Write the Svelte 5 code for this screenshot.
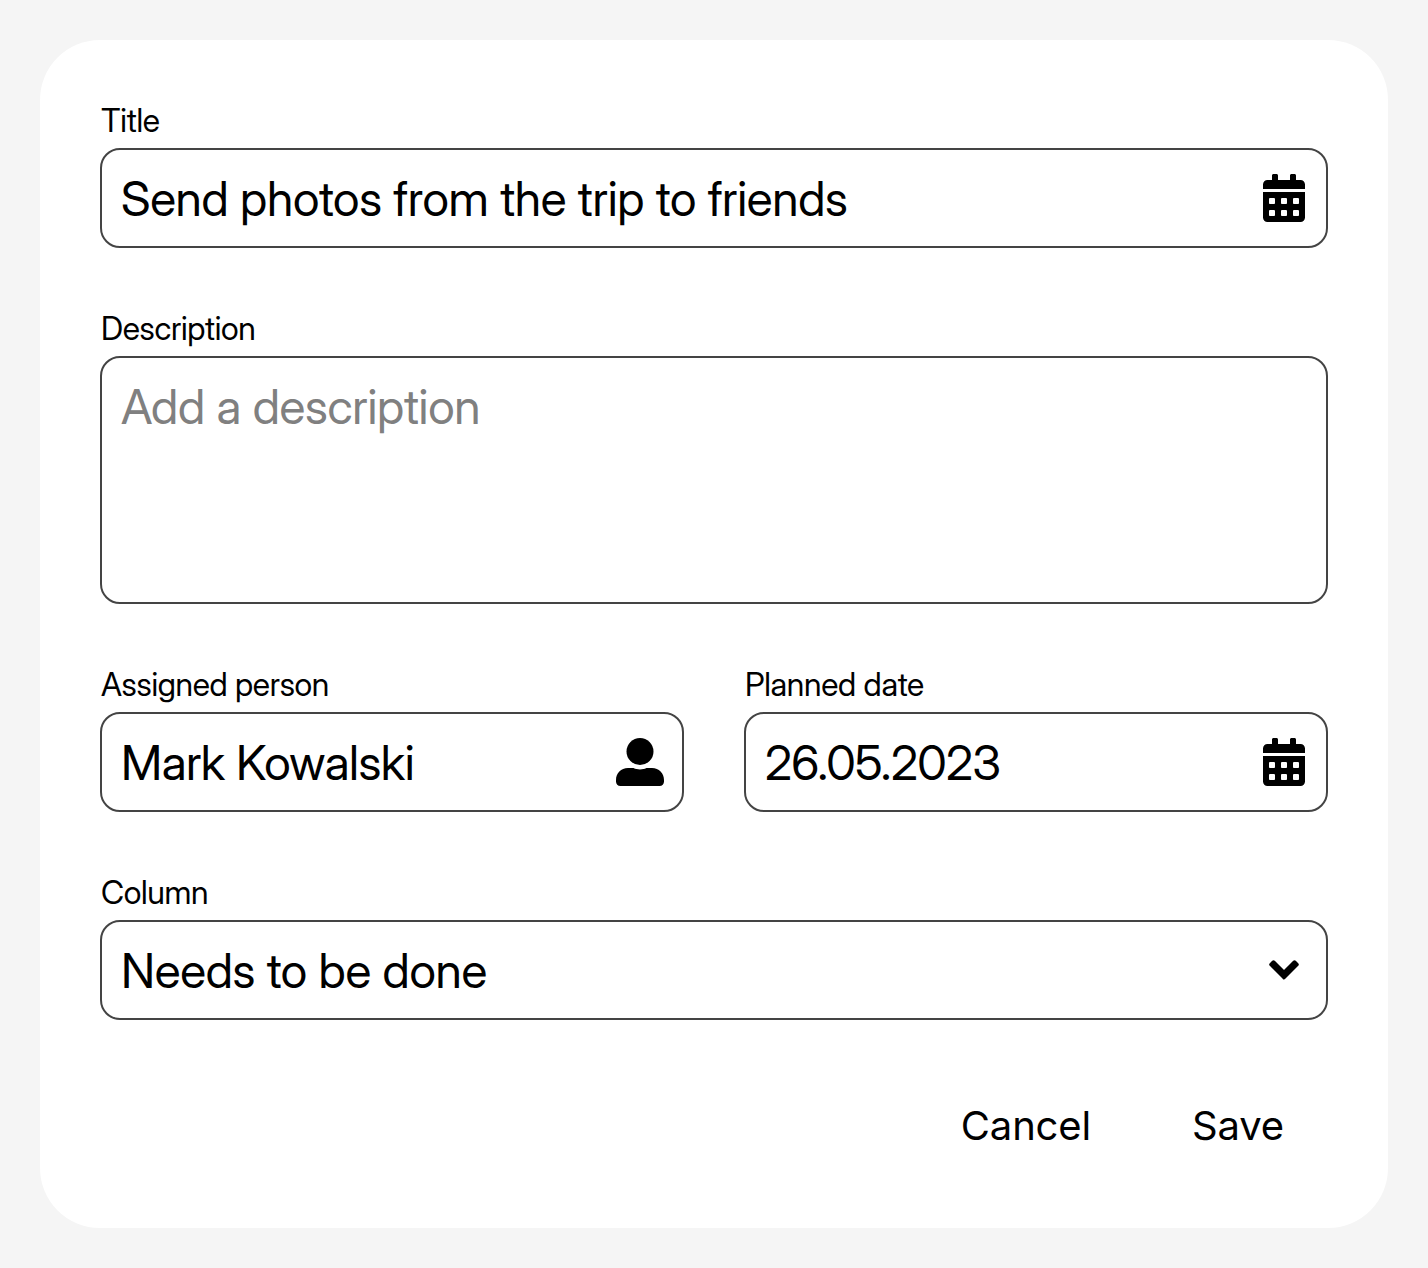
<script>
  const fields = [
    { label: 'Title', value: 'Send photos from the trip to friends', icon: 'calendar' },
    { label: 'Description', value: 'Add a description', kind: 'area' },
    { label: 'Assigned person', value: 'Mark Kowalski', icon: 'user', kind: 'half' },
    { label: 'Planned date', value: '26.05.2023', icon: 'calendar', kind: 'half date' },
    { label: 'Column', value: 'Needs to be done', icon: 'chevron' }
  ];
</script>

<main>
  <form class="card">
    {#each fields as f}
      <div class="field {f.kind ?? ''}">
        <span class="label">{f.label}</span>
        <div class="box">
          <span class="value">{f.value}</span>
          {#if f.icon === 'calendar'}
            <svg class="calendar" viewBox="0 0 448 512">
              <path d="M0 464c0 26.500 21.500 48 48 48h352c26.500 0 48-21.500 48-48V192H0v272zm320-196c0-6.600 5.400-12 12-12h40c6.600 0 12 5.400 12 12v40c0 6.600-5.400 12-12 12h-40c-6.600 0-12-5.400-12-12v-40zm0 128c0-6.600 5.400-12 12-12h40c6.600 0 12 5.400 12 12v40c0 6.600-5.400 12-12 12h-40c-6.600 0-12-5.400-12-12v-40zM192 268c0-6.600 5.400-12 12-12h40c6.600 0 12 5.400 12 12v40c0 6.600-5.400 12-12 12h-40c-6.600 0-12-5.400-12-12v-40zm0 128c0-6.600 5.400-12 12-12h40c6.600 0 12 5.400 12 12v40c0 6.600-5.400 12-12 12h-40c-6.600 0-12-5.400-12-12v-40zM64 268c0-6.600 5.400-12 12-12h40c6.600 0 12 5.400 12 12v40c0 6.600-5.400 12-12 12H76c-6.600 0-12-5.400-12-12v-40zm0 128c0-6.600 5.400-12 12-12h40c6.600 0 12 5.400 12 12v40c0 6.600-5.400 12-12 12H76c-6.600 0-12-5.400-12-12v-40zM400 64h-48V16c0-8.800-7.200-16-16-16h-32c-8.800 0-16 7.200-16 16v48H160V16c0-8.800-7.200-16-16-16h-32c-8.800 0-16 7.200-16 16v48H48C21.500 64 0 85.500 0 112v48h448v-48c0-26.500-21.500-48-48-48z" />
            </svg>
          {:else if f.icon === 'user'}
            <svg class="user" viewBox="0 0 48 48">
              <circle cx="24" cy="13.500" r="13.500" />
              <path d="M0 43.500V42C0 35 5 30 12 30H17.500C19.500 31 21.500 31.400 24 31.400S28.500 31 30.500 30H36C43 30 48 35 48 42V43.500C48 46.200 46.200 48 43.500 48H4.500C1.800 48 0 46.200 0 43.500Z" />
            </svg>
          {:else if f.icon === 'chevron'}
            <svg class="chevron" viewBox="0 0 42 48">
              <path d="M8.050 18.500L10.500 16.050L21 26.500L31.500 16.050L33.950 18.500L21 31.600Z" />
            </svg>
          {/if}
        </div>
      </div>
    {/each}
    <div class="actions">
      <button type="button">Cancel</button>
      <button type="button">Save</button>
    </div>
  </form>
</main>

<style>
  :global(body) { background: #f5f5f5; }
  main { padding: 40px; font-family: "Inter Display", Inter, "Liberation Sans", sans-serif; color: #000; }
  .card {
    box-sizing: border-box;
    height: 1188px;
    padding: 60px;
    border-radius: 60px;
    background: #fff;
    display: grid;
    grid-template-columns: 1fr 1fr;
    column-gap: 60px;
    row-gap: 60px;
    align-content: start;
  }
  .field { grid-column: 1 / -1; }
  .half { grid-column: auto; }
  .label { display: block; height: 48px; padding-left: 1px; line-height: 42px; font-size: 32px; letter-spacing: -0.3px; }
  .box {
    box-sizing: border-box;
    height: 100px;
    padding: 0 18px 0 19px;
    border: 2px solid #444;
    border-radius: 20px;
    display: flex;
    align-items: center;
    justify-content: space-between;
  }
  .value { padding-top: 2px; font-size: 48px; line-height: 60px; letter-spacing: -0.3px; white-space: nowrap; }
  .half .value { letter-spacing: -0.45px; }
  .date .value { letter-spacing: -0.63px; }
  .area .box { height: 248px; align-items: flex-start; padding-top: 18px; }
  .area .value { padding-top: 1px; color: #808080; }
  svg { display: block; height: 48px; fill: #000; }
  .calendar { width: 42px; margin-right: 3px; }
  .user { width: 48px; }
  .chevron { width: 42px; margin-right: 3px; }
  .chevron path { stroke: #000; stroke-width: 3.6px; stroke-linejoin: round; }
  .actions { grid-column: 1 / -1; display: flex; justify-content: flex-end; gap: 101px; padding: 16px 44px 0 0; }
  button { border: 0; padding: 0; background: none; color: #000; font: 40px/60px Inter, sans-serif; letter-spacing: -0.15px; }
</style>
